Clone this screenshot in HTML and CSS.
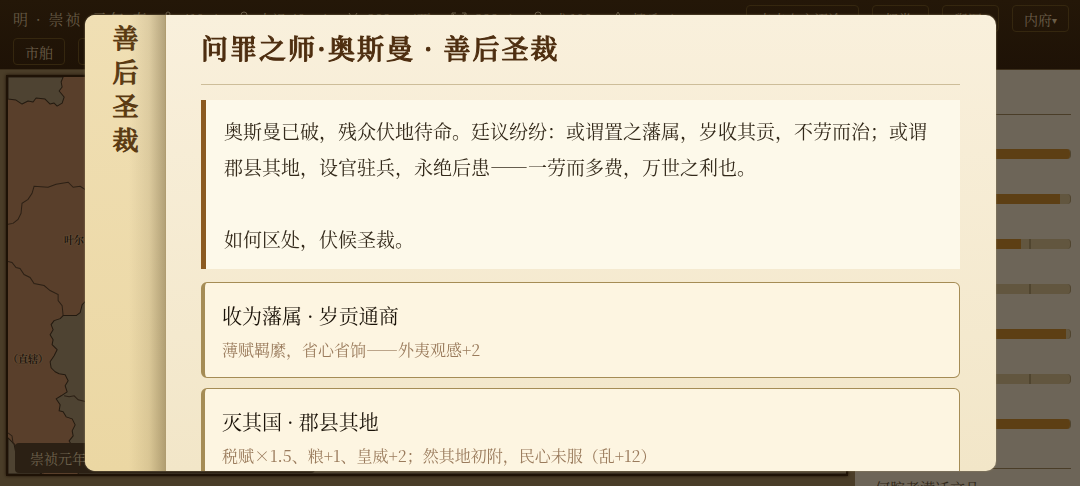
FILE: index.html
```html
<!DOCTYPE html>
<html lang="zh-CN">
<head>
    <meta charset="UTF-8">
    <meta name="viewport" content="width=device-width, initial-scale=1.0">
    <title>善后圣裁</title>
    <link rel="stylesheet" href="styles.css">
</head>
<body>
    <div class="game">
        <header class="topbar">
            <div class="row">
                <span class="era">明 · 崇祯&ensp;元年 春</span>
                <div class="stats">
                    <span class="stat"><svg class="icon" viewBox="0 0 12 16"><circle cx="6" cy="3" r="2"/><path d="M2 14V8H10V14"/></svg>410万</span>
                    <span class="stat"><svg class="icon" viewBox="0 0 12 16"><circle cx="6" cy="4" r="3"/><path d="M1 15C1 9 11 9 11 15"/></svg>太祖 405万</span>
                    <span class="stat"><svg class="icon" viewBox="0 0 12 16"><path d="M2 2L6 8L10 2M6 8V15M2 9H10M2 12H10"/></svg>388.7万两</span>
                    <span class="stat"><svg class="icon icon-wide" viewBox="0 0 16 16"><path d="M1 6V2H5M11 2H15V6M15 11V15H11M5 15H1V11M2 3L6 7M14 3L10 7"/></svg>388万</span>
                    <span class="stat"><svg class="icon" viewBox="0 0 12 16"><circle cx="6" cy="4" r="3"/><path d="M6 7V15M3 12H9"/></svg>威 100</span>
                    <span class="stat"><svg class="icon" viewBox="0 0 12 16"><path d="M6 1L9 6V14H3V6Z"/></svg>精兵万</span>
                </div>
                <button class="btn">点击上方诏谕<span class="caret">▾</span></button>
                <button class="btn">朝堂<span class="caret">▾</span></button>
                <button class="btn">舆图<span class="caret">▾</span></button>
                <button class="btn">内府<span class="caret">▾</span></button>
            </div>
            <div class="row">
                <button class="btn">市舶</button>
                <button class="btn">科举</button>
            </div>
        </header>
        <main class="board">
            <section class="map">
                <svg class="land" viewBox="0 0 838 396" preserveAspectRatio="xMinYMin slice">
                    <rect width="838" height="396" fill="#593f2b"/>
                    <path class="plain" d="M0 0H55L53 5L54 10L51 14L56 20L54 26L49 29L46 26L42 27L37 22L28 21L25 25L20 24L14 27L8 23L0 22Z"/>
                    <path class="plain" d="M78 223L74 227L72 235L68 238L55 238L52 241L46 243L43 247L45 252L42 257L45 262L44 267L49 272L46 278L42 284L43 290L47 294L51 296L57 297L60 303L57 308L59 314L53 318L48 321L52 327L51 333L55 334L58 339L64 341L67 347L64 353L65 358L61 363L64 368L70 371V396H838V180H78Z"/>
                    <path class="plain" d="M0 360L6 366L8 376L18 386L34 396H0Z"/>
                    <path class="coast" d="M0 147L5 146L10 142L13 136L14 126L20 122L24 116L26 109L40 110L48 107L60 105L65 110L72 109L78 113H90"/>
                    <path class="coast" d="M0 184L4 185L8 190L12 191L16 197L22 200L26 206L36 208L42 213L50 217L50 223L54 228L55 238"/>
                    <path class="coast" d="M56 318L61 319L66 318L70 322L78 324"/>
                    <path class="coast" d="M0 355L4 358L5 365L10 370L14 380L22 387L36 395"/>
                </svg>
                <span class="place place-yarkand">叶尔羌</span>
                <span class="place place-ruled">（直辖）</span>
                <div class="datebar">崇祯元年</div>
            </section>
            <aside class="side">
                <div class="meters">
                    <div class="meter"><i style="width:100%"></i></div>
                    <div class="meter"><i style="width:95%"></i></div>
                    <div class="meter"><i style="width:75%"></i></div>
                    <div class="meter"><i style="width:0%"></i></div>
                    <div class="meter"><i style="width:98%"></i></div>
                    <div class="meter"><i style="width:0%"></i></div>
                    <div class="meter"><i style="width:100%"></i></div>
                </div>
                <p class="note">何腔考满迁文凡</p>
            </aside>
        </main>
    </div>

    <div class="overlay">
        <div class="modal" role="dialog" aria-labelledby="modal-title">
            <div class="spine">善后圣裁</div>
            <div class="content">
                <h1 id="modal-title">问罪之师·奥斯曼 · 善后圣裁</h1>
                <div class="memorial">
                    <p>奥斯曼已破，残众伏地待命。廷议纷纷：或谓置之藩属，岁收其贡，不劳而治；或谓郡县其地，设官驻兵，永绝后患——一劳而多费，万世之利也。</p>
                    <p>如何区处，伏候圣裁。</p>
                </div>
                <button class="option">
                    <span class="option-title">收为藩属 · 岁贡通商</span>
                    <span class="option-desc">薄赋羁縻，省心省饷——外夷观感+2</span>
                </button>
                <button class="option">
                    <span class="option-title">灭其国 · 郡县其地</span>
                    <span class="option-desc">税赋×1.5、粮+1、皇威+2；然其地初附，民心未服（乱+12）</span>
                </button>
            </div>
        </div>
    </div>
</body>
</html>
```
FILE: styles.css
```css
* {
    box-sizing: border-box;
}
body {
    margin: 0;
    height: 100vh;
    overflow: hidden;
    background: #4a3d28;
    font-family: "Noto Serif CJK SC", "Noto Serif SC", "Source Han Serif SC", "Noto Sans CJK SC", serif;
}
button {
    font-family: inherit;
    cursor: pointer;
}
p {
    margin: 0;
}
.game {
    height: 100%;
    display: flex;
    flex-direction: column;
}

/* top bar */
.topbar {
    flex: none;
    height: 70px;
    padding: 5px 11px 5px 13px;
    display: flex;
    flex-direction: column;
    gap: 6px;
    background: linear-gradient(#241708, #1e1206);
    border-bottom: 1px solid #3c2f1c;
    color: #665a45;
    overflow: hidden;
}
.row {
    display: flex;
    align-items: center;
    gap: 13px;
    white-space: nowrap;
}
.era {
    font-size: 15px;
    letter-spacing: 2px;
}
.stats {
    flex: 1;
    display: flex;
    gap: 20px;
    font-size: 14px;
}
.stat {
    display: flex;
    align-items: center;
    gap: 8px;
}
.icon {
    width: 12px;
    height: 16px;
    fill: none;
    stroke: #665a45;
    stroke-width: 1;
}
.icon-wide {
    width: 16px;
}
.btn {
    height: 27px;
    padding: 0 11px;
    font-size: 14px;
    color: #6a5d48;
    background: none;
    border: 1px solid #35270f;
    border-radius: 4px;
}
.caret {
    font-size: 10px;
    vertical-align: 1px;
}

/* map and side panel */
.board {
    flex: 1;
    min-height: 0;
    display: flex;
}
.map {
    position: relative;
    flex: 1;
    margin: 5px 7px 10px 6px;
    border: 2px solid #1e1206;
    box-shadow: 0 0 3px #1e1206;
    overflow: hidden;
}
.land {
    display: block;
    width: 100%;
    height: 100%;
}
.plain {
    fill: #4e4332;
    stroke: #231a10;
    stroke-width: 1;
    stroke-linejoin: round;
}
.coast {
    fill: none;
    stroke: #2c2015;
    stroke-width: 1;
}
.place {
    position: absolute;
    font-size: 10px;
    font-weight: 600;
    color: #120c06;
    text-shadow: 0 0 2px #7a6a4e;
}
.place-yarkand {
    left: 56px;
    top: 155px;
}
.place-ruled {
    left: 0;
    top: 274px;
}
.datebar {
    position: absolute;
    left: 7px;
    bottom: 1px;
    width: 300px;
    height: 30px;
    padding-left: 15px;
    font-size: 14px;
    line-height: 30px;
    color: #6d614c;
    background: #2b2014;
    border-radius: 4px;
}
.side {
    width: 225px;
    padding: 44px 9px 0 20px;
    background: #6d6558;
}
.meters {
    height: 355px;
    padding-top: 34px;
    display: flex;
    flex-direction: column;
    gap: 35px;
    border-top: 1px solid #4a3d28;
    border-bottom: 1px solid #4a3d28;
}
.meter {
    flex: none;
    height: 10px;
    background: linear-gradient(90deg, transparent 79%, #50452f 79%, #50452f 80%, transparent 80%), #62563f;
    border-right: 1px solid #50452f;
    border-radius: 4px;
    overflow: hidden;
}
.meter i {
    display: block;
    height: 100%;
    background: #5d3f14;
}
.note {
    padding-top: 8px;
    font-size: 15px;
    line-height: 22px;
    color: #2f2517;
}

/* decision dialog */
.overlay {
    position: fixed;
    inset: 0;
    padding: 15px 84px 15px 85px;
    display: flex;
}
.modal {
    flex: 1;
    display: flex;
    border-radius: 10px;
    overflow: hidden;
    background: linear-gradient(#f9f0dc, #f2e6c8);
    box-shadow: 0 0 2px #9c8c66;
}
.spine {
    flex: none;
    width: 81px;
    padding-top: 10px;
    display: flex;
    align-items: center;
    writing-mode: vertical-rl;
    font-size: 26px;
    font-weight: 500;
    -webkit-text-stroke: 1px;
    letter-spacing: 8px;
    line-height: 80px;
    color: #5a3a12;
    background: linear-gradient(90deg, transparent 55%, rgba(90, 74, 40, 0.12) 80%, rgba(90, 74, 40, 0.4)), linear-gradient(#f0dfb4, #ebd7a3);
    border-right: 1px solid #b09c70;
}
.content {
    flex: 1;
    min-width: 0;
    padding: 11px 36px 12px 35px;
    overflow: hidden;
}
h1 {
    margin: 0 0 15px;
    padding-bottom: 15px;
    font-size: 27px;
    font-weight: 500;
    -webkit-text-stroke: 1px;
    line-height: 43px;
    letter-spacing: 2px;
    color: #4e2e10;
    border-bottom: 1px solid #cdbd99;
}
.memorial {
    margin-bottom: 13px;
    padding: 13px 18px 12px;
    font-size: 19px;
    line-height: 36px;
    color: #33291a;
    background: #fdf9ea;
    border-left: 5px solid #8b5a20;
}
.memorial p + p {
    margin-top: 36px;
}
.option {
    display: block;
    width: 100%;
    height: 96px;
    margin-bottom: 10px;
    padding: 3px 17px 0;
    text-align: left;
    background: #fdf5e1;
    border: 1px solid #a58c55;
    border-left-width: 4px;
    border-radius: 6px;
}
.option-title {
    display: block;
    font-size: 20px;
    line-height: 36px;
    color: #1a1208;
}
.option-desc {
    display: block;
    font-size: 16px;
    line-height: 32px;
    color: #9a7b5c;
}
```
